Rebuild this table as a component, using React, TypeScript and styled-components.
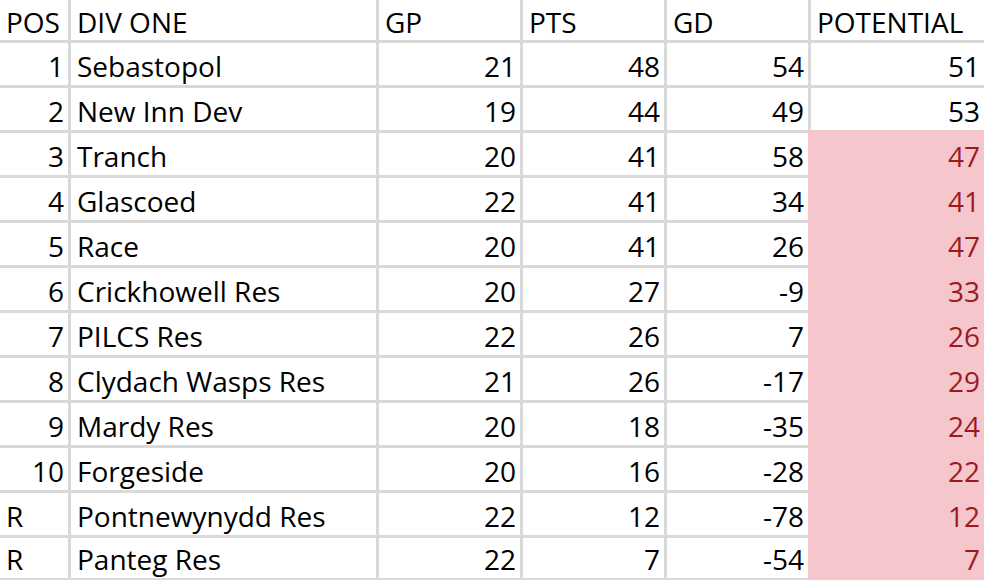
import React from "react";
import styled, { createGlobalStyle } from "styled-components";

const Global = createGlobalStyle`
  html, body {
    margin: 0;
    padding: 0;
    background: #ffffff;
    overflow: hidden;
  }
`;

type Row = [string, string, number, number, number, number];

const rows: Row[] = [
  ["1", "Sebastopol", 21, 48, 54, 51],
  ["2", "New Inn Dev", 19, 44, 49, 53],
  ["3", "Tranch", 20, 41, 58, 47],
  ["4", "Glascoed", 22, 41, 34, 41],
  ["5", "Race", 20, 41, 26, 47],
  ["6", "Crickhowell Res", 20, 27, -9, 33],
  ["7", "PILCS Res", 22, 26, 7, 26],
  ["8", "Clydach Wasps Res", 21, 26, -17, 29],
  ["9", "Mardy Res", 20, 18, -35, 24],
  ["10", "Forgeside", 20, 16, -28, 22],
  ["R", "Pontnewynydd Res", 22, 12, -78, 12],
  ["R", "Panteg Res", 22, 7, -54, 7],
];

const headers = ["POS", "DIV ONE", "GP", "PTS", "GD", "POTENTIAL"];

const App: React.FC = () => {
  return (
    <>
      <Global />
      <Sheet>
        {headers.map((h, i) => (
          <HeadCell key={h} $first={i === 0}>
            {h}
          </HeadCell>
        ))}
        {rows.map((r, ri) => {
          // everything from 3rd place down is highlighted in the last column
          const hot = ri >= 2;
          const last = ri === rows.length - 1;
          const isNum = /^\d+$/.test(r[0]);
          return (
            <React.Fragment key={ri}>
              <Cell $first $right={isNum} $last={last}>
                {r[0]}
              </Cell>
              <Cell $last={last}>{r[1]}</Cell>
              <Cell $right $last={last}>
                {r[2]}
              </Cell>
              <Cell $right $last={last}>
                {r[3]}
              </Cell>
              <Cell $right $last={last}>
                {r[4]}
              </Cell>
              <Cell $right $hot={hot} $last={last}>
                {r[5]}
              </Cell>
            </React.Fragment>
          );
        })}
      </Sheet>
    </>
  );
};

export default App;

const grid = "#d9d9d9";
const pink = "#f5c7cd";

const Sheet = styled.div`
  display: grid;
  grid-template-columns: 68px 308px 144px 144px 144px 176px;
  grid-template-rows: 40px repeat(12, 45px);
  width: 984px;
  font-family: "Open Sans", Lato, sans-serif;
  font-size: 28px;
  color: #000000;
`;

const HeadCell = styled.div<{ $first?: boolean }>`
  box-sizing: border-box;
  display: flex;
  align-items: flex-end;
  padding: 0 4px 3px 6px;
  border-left: ${(p) => (p.$first ? "none" : `3px solid ${grid}`)};
  line-height: 30px;
  white-space: nowrap;
`;

const Cell = styled.div<{
  $first?: boolean;
  $right?: boolean;
  $hot?: boolean;
  $last?: boolean;
}>`
  box-sizing: border-box;
  display: flex;
  align-items: flex-end;
  justify-content: ${(p) => (p.$right ? "flex-end" : "flex-start")};
  padding: 0 4px 4px 6px;
  border-top: 3px solid ${(p) => (p.$hot ? pink : grid)};
  border-left: ${(p) =>
    p.$first ? "none" : `3px solid ${p.$hot ? pink : grid}`};
  border-bottom: ${(p) =>
    p.$last ? `2px solid ${p.$hot ? pink : grid}` : "none"};
  background: ${(p) => (p.$hot ? pink : "#ffffff")};
  color: ${(p) => (p.$hot ? "#9c1a1f" : "#000000")};
  line-height: 30px;
  white-space: nowrap;
`;
